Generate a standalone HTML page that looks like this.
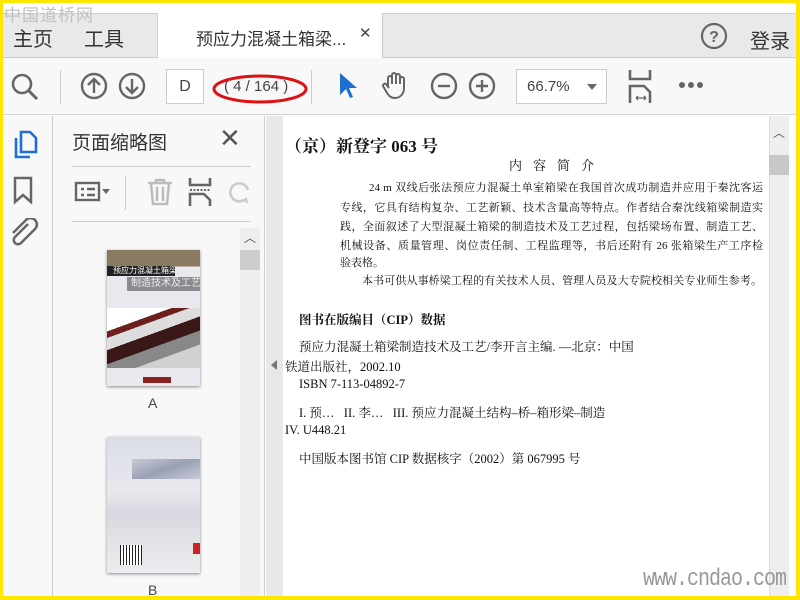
<!DOCTYPE html>
<html><head><meta charset="utf-8"><style>
*{margin:0;padding:0;box-sizing:border-box}
body{width:800px;height:600px;overflow:hidden;background:#ffe600;font-family:"Liberation Sans","Noto Sans CJK SC",sans-serif;position:relative}
.a{position:absolute}
.ser{font-family:"Liberation Serif","Noto Serif CJK SC",serif;color:#111}
.jl{position:absolute;font-size:11px;text-align:justify;text-align-last:justify;white-space:nowrap;height:16px;line-height:16px}
</style></head><body>
<div class="a" style="left:3px;top:3px;width:793px;height:593px;background:#fff"></div>
<div class="a" style="left:3px;top:13px;width:793px;height:45px;background:#e9e9e9;border-top:1px solid #d0d0d0;border-bottom:1px solid #ccc"></div>
<div class="a" style="left:157px;top:13px;width:226px;height:45px;background:#fff;border-left:1px solid #ccc;border-right:1px solid #ccc"></div>
<div class="a" style="left:4px;top:1px;font-size:17px;color:#c0c0c0;letter-spacing:1px">中国道桥网</div>
<div class="a" style="left:13px;top:23px;font-size:20px;color:#333">主页</div>
<div class="a" style="left:84px;top:23px;font-size:20px;color:#333">工具</div>
<div class="a" style="left:196px;top:25px;font-size:17px;color:#333">预应力混凝土箱梁...</div>
<div class="a" style="left:359px;top:24px;font-size:15px;color:#444">✕</div>
<svg class="a" style="left:700px;top:22px" width="28" height="28"><circle cx="14" cy="14" r="12" fill="none" stroke="#666" stroke-width="2.2"/><text x="14" y="20" font-size="16" text-anchor="middle" fill="#666" font-family="Liberation Sans" font-weight="bold">?</text></svg>
<div class="a" style="left:750px;top:25px;font-size:20px;color:#333">登录</div>
<div class="a" style="left:3px;top:58px;width:793px;height:57px;background:#f8f8f8;border-bottom:1px solid #d4d4d4"></div>
<svg class="a" style="left:10px;top:72px" width="30" height="30"><circle cx="12" cy="12" r="9" fill="none" stroke="#666" stroke-width="2.6"/><path d="M18 18 L27 27" stroke="#666" stroke-width="3"/></svg>
<div class="a" style="left:60px;top:70px;width:1px;height:34px;background:#ccc"></div>
<svg class="a" style="left:80px;top:72px" width="66" height="30"><g fill="none" stroke="#666" stroke-width="2.4"><circle cx="14" cy="14" r="12"/><path d="M14 21V7M8 13l6-6 6 6"/><circle cx="52" cy="14" r="12"/><path d="M52 7v14M46 15l6 6 6-6"/></g></svg>
<div class="a" style="left:166px;top:69px;width:38px;height:35px;background:#fff;border:1px solid #ccc;font-size:16px;color:#444;text-align:center;line-height:33px">D</div>
<div class="a" style="left:224px;top:78px;font-size:15px;color:#444">( 4 / 164 )</div>
<svg class="a" style="left:210px;top:70px" width="100" height="40"><ellipse cx="50" cy="19" rx="46" ry="13" fill="none" stroke="#d11" stroke-width="3"/></svg>
<div class="a" style="left:311px;top:70px;width:1px;height:34px;background:#ccc"></div>
<svg class="a" style="left:336px;top:71px" width="24" height="30"><path d="M4 2 L4 24 L10 18 L14 27 L17 26 L13 17 L21 17 Z" fill="#1f6fd0"/></svg>
<svg class="a" style="left:380px;top:70px" width="32" height="32"><path d="M8 16V8a2 2 0 014 0v6M12 14V5a2 2 0 014 0v9M16 14V6a2 2 0 014 0v8M20 14V9a2 2 0 014 0v9c0 6-4 10-9 10c-4 0-6-2-8-5l-4-7a2 2 0 013-2l3 4" fill="none" stroke="#666" stroke-width="2"/></svg>
<svg class="a" style="left:429px;top:72px" width="70" height="30"><g fill="none" stroke="#666" stroke-width="2.4"><circle cx="15" cy="14" r="12"/><path d="M9 14h12"/><circle cx="53" cy="14" r="12"/><path d="M47 14h12M53 8v12"/></g></svg>
<div class="a" style="left:516px;top:69px;width:91px;height:35px;background:#fff;border:1px solid #ccc;font-size:15px;color:#444;padding:8px 0 0 10px">66.7%<span style="position:absolute;left:70px;top:14px;border:5px solid transparent;border-top:6px solid #666"></span></div>
<svg class="a" style="left:627px;top:70px" width="28" height="33"><g fill="none" stroke="#666" stroke-width="2.6"><path d="M3 0v9h20V0M3 33V16h14l6 6v11"/></g><path d="M9 28h10M9 28l2-2M9 28l2 2M19 28l-2-2M19 28l-2 2" stroke="#666" stroke-width="1.3"/></svg>
<svg class="a" style="left:678px;top:80px" width="30" height="10"><g fill="#666"><circle cx="4" cy="5" r="3"/><circle cx="13" cy="5" r="3"/><circle cx="22" cy="5" r="3"/></g></svg>
<div class="a" style="left:3px;top:116px;width:50px;height:480px;background:#f8f8f8;border-right:1px solid #ccc"></div>
<svg class="a" style="left:12px;top:129px" width="28" height="32"><g fill="none" stroke="#1f6fd0" stroke-width="2.6"><path d="M9 3h9l6 6v14H9z"/><path d="M4 9v19h14"/></g></svg>
<svg class="a" style="left:13px;top:176px" width="22" height="30"><path d="M2 2h16v24l-8-7-8 7z" fill="none" stroke="#666" stroke-width="2.5"/></svg>
<svg class="a" style="left:8px;top:218px" width="32" height="32"><path d="M20 6l-13 13a4 4 0 006 6l14-14a6 6 0 00-9-9L5 15" fill="none" stroke="#666" stroke-width="2.5"/></svg>
<div class="a" style="left:53px;top:116px;width:212px;height:480px;background:#f8f8f8;border-right:1px solid #d0d0d0"></div>
<div class="a" style="left:72px;top:128px;font-size:19px;color:#333">页面缩略图</div>
<div class="a" style="left:219px;top:123px;font-size:26px;color:#555">✕</div>
<div class="a" style="left:72px;top:166px;width:179px;height:1px;background:#ccc"></div>
<div class="a" style="left:72px;top:221px;width:179px;height:1px;background:#ccc"></div>
<div class="a" style="left:125px;top:176px;width:1px;height:34px;background:#ccc"></div>
<svg class="a" style="left:74px;top:178px" width="40" height="28"><rect x="2" y="5" width="23" height="17" fill="none" stroke="#666" stroke-width="2.4"/><path d="M7 11h3M13 11h8M7 17h3M13 17h8" stroke="#666" stroke-width="2.4"/><path d="M28 11l4 5 4-5z" fill="#666"/></svg>
<svg class="a" style="left:146px;top:177px" width="28" height="30"><g fill="none" stroke="#bbb" stroke-width="2.4"><path d="M2 6h24M10 6V3h8v3M5 6l2 21h14l2-21M11 10v14M17 10v14"/></g></svg>
<svg class="a" style="left:188px;top:178px" width="26" height="28"><g fill="none" stroke="#666" stroke-width="2.6"><path d="M2 0v7h20V0M2 28V16h14l6 6v6"/></g><path d="M2 12h20" stroke="#666" stroke-dasharray="2 1.5" stroke-width="2"/></svg>
<svg class="a" style="left:228px;top:178px" width="24" height="28"><path d="M20 12a9 9 0 10-4 10" fill="none" stroke="#ccc" stroke-width="2.6"/><path d="M14 22l5-3 1 7z" fill="#ccc"/></svg>
<div class="a" style="left:240px;top:228px;width:20px;height:368px;background:#eee"></div>
<div class="a" style="left:240px;top:250px;width:20px;height:20px;background:#ccc"></div>
<div class="a" style="left:244px;top:229px;font-size:12px;color:#555">︿</div>
<div class="a" style="left:107px;top:250px;width:93px;height:136px;background:linear-gradient(#8a7a62 0 12%,#e8e8ee 12% 100%);box-shadow:0 1px 3px #888;overflow:hidden">
<div class="a" style="left:0;top:16px;width:68px;height:10px;background:#222;color:#fff;font-size:8px;line-height:10px;padding-left:6px;white-space:nowrap;overflow:hidden">预应力混凝土箱梁</div>
<div class="a" style="left:20px;top:27px;width:73px;height:14px;background:#8a8a90;color:#eee;font-size:10px;line-height:14px;padding-left:4px;white-space:nowrap;overflow:hidden">制造技术及工艺</div>
<div class="a" style="left:0;top:58px;width:93px;height:60px;background:linear-gradient(160deg,#fff 0 25%,#6b2020 25% 32%,#ddd 32% 45%,#3a1818 45% 60%,#888 60% 75%,#d0d0d0 75%)"></div>
<div class="a" style="left:36px;top:127px;width:28px;height:6px;background:#8a2020"></div>
</div>
<div class="a" style="left:148px;top:395px;font-size:14px;color:#444">A</div>
<div class="a" style="left:107px;top:437px;width:93px;height:136px;background:linear-gradient(#dadce6,#e8e8ee 40%,#d8d8e0 55%,#ececf0);box-shadow:0 1px 3px #888;overflow:hidden">
<div class="a" style="left:25px;top:22px;width:68px;height:20px;background:linear-gradient(160deg,#c8cad6,#9aa0b4 50%,#c8cad6)"></div>
<div class="a" style="left:13px;top:108px;width:22px;height:20px;background:repeating-linear-gradient(90deg,#222 0 1px,#fff 1px 3px)"></div>
<div class="a" style="left:86px;top:106px;width:7px;height:11px;background:#c22"></div>
</div>
<div class="a" style="left:148px;top:582px;font-size:14px;color:#444">B</div>
<div class="a" style="left:266px;top:116px;width:17px;height:480px;background:#e8e8e8"></div>
<div class="a" style="left:271px;top:360px;border:5px solid transparent;border-right:6px solid #777;border-left:0"></div>
<div class="a" style="left:283px;top:116px;width:486px;height:480px;background:#fff"></div>
<div class="a" style="left:769px;top:116px;width:20px;height:480px;background:#eee;border-left:1px solid #ddd"></div>
<div class="a" style="left:769px;top:155px;width:20px;height:20px;background:#c8c8c8"></div>
<div class="a" style="left:773px;top:124px;font-size:12px;color:#555">︿</div>
<div class="a" style="left:789px;top:116px;width:7px;height:480px;background:#fff"></div>
<div class="ser a" style="left:285px;top:132px;font-size:17px;font-weight:bold">（京）新登字 063 号</div>
<div class="ser a" style="left:509px;top:155px;font-size:13px;letter-spacing:11px">内容简介</div>
<div class="ser jl" style="left:369px;top:180px;width:394px">24 m 双线后张法预应力混凝土单室箱梁在我国首次成功制造并应用于秦沈客运</div>
<div class="ser jl" style="left:340px;top:200px;width:423px">专线，它具有结构复杂、工艺新颖、技术含量高等特点。作者结合秦沈线箱梁制造实</div>
<div class="ser jl" style="left:340px;top:219px;width:423px">践，全面叙述了大型混凝土箱梁的制造技术及工艺过程，包括梁场布置、制造工艺、</div>
<div class="ser jl" style="left:340px;top:238px;width:423px">机械设备、质量管理、岗位责任制、工程监理等，书后还附有 26 张箱梁生产工序检</div>
<div class="ser a" style="left:340px;top:255px;font-size:11px;line-height:16px">验表格。</div>
<div class="ser jl" style="left:362px;top:273px;width:400px">本书可供从事桥梁工程的有关技术人员、管理人员及大专院校相关专业师生参考。</div>
<div class="ser a" style="left:299px;top:310px;font-size:12.5px;font-weight:bold">图书在版编目（CIP）数据</div>
<div class="ser a" style="left:299px;top:337px;font-size:12.5px">预应力混凝土箱梁制造技术及工艺/李开言主编. —北京：中国</div>
<div class="ser a" style="left:285px;top:357px;font-size:12.5px">铁道出版社，2002.10</div>
<div class="ser a" style="left:299px;top:377px;font-size:12.5px">ISBN 7-113-04892-7</div>
<div class="ser a" style="left:299px;top:403px;font-size:12.5px">I. 预…&nbsp;&nbsp;&nbsp;II. 李…&nbsp;&nbsp;&nbsp;III. 预应力混凝土结构–桥–箱形梁–制造</div>
<div class="ser a" style="left:285px;top:423px;font-size:12.5px">IV. U448.21</div>
<div class="ser a" style="left:299px;top:449px;font-size:12.5px">中国版本图书馆 CIP 数据核字（2002）第 067995 号</div>
<div class="a" style="left:643px;top:568px;font-size:20px;color:#999;font-family:'Liberation Mono',monospace;letter-spacing:-1px;transform:scaleY(1.2)">www.cndao.com</div>
</body></html>
